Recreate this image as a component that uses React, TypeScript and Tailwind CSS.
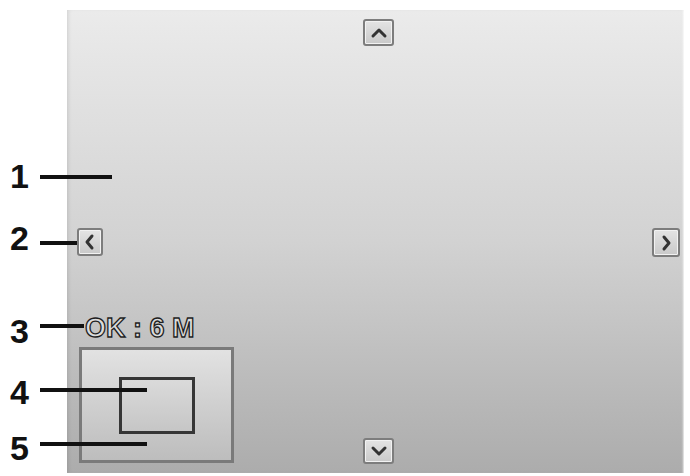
import React from 'react';

type Dir = 'up' | 'down' | 'left' | 'right';

const chevrons: Record<Dir, string> = {
  up: 'M9 16 L15 10 L21 16',
  down: 'M9 10 L15 16 L21 10',
  left: 'M15 8 L10 14 L15 20',
  right: 'M11 8 L16 14 L11 20',
};

const NavButton = ({ dir, className }: { dir: Dir; className: string }) => {
  const vertical = dir === 'up' || dir === 'down';
  return (
    <div
      className={`flex items-center justify-center rounded-[3px] border-2 border-[#7d7d7d] bg-gradient-to-b from-[#e4e4e4] to-[#c9c9c9] shadow-[inset_0_0_0_1px_#f2f2f2] ${className}`}
    >
      <svg
        width={vertical ? 30 : 26}
        height={vertical ? 26 : 28}
        viewBox={vertical ? '0 0 30 26' : '0 0 26 28'}
        fill="none"
        className="shrink-0"
      >
        <path d={chevrons[dir]} stroke="#333" strokeWidth="3" strokeLinecap="round" strokeLinejoin="round" />
      </svg>
    </div>
  );
};

const callouts = [
  { n: '1', top: 'top-[159px]', mt: 'mt-[16px]', w: 'w-[72px]' },
  { n: '2', top: 'top-[221px]', mt: 'mt-[20px]', w: 'w-[37px]' },
  { n: '3', top: 'top-[314px]', mt: 'mt-[10px]', w: 'w-[44px]' },
  { n: '4', top: 'top-[375px]', mt: 'mt-[13px]', w: 'w-[107px]' },
  { n: '5', top: 'top-[431px]', mt: 'mt-[11px]', w: 'w-[107px]' },
];

const App = () => {
  return (
    <div className="relative w-[690px] h-[476px] overflow-hidden bg-white font-['Liberation_Sans',Arial,sans-serif]">
      {/* preview screen */}
      <div className="ml-[67px] mt-[10px] flex h-[463px] w-[617px] flex-col bg-gradient-to-b from-[#ebebeb] via-[#d2d2d2] to-[#acacac] pt-[9px] shadow-[inset_3px_0_4px_-2px_rgba(0,0,0,0.12),inset_-2px_0_2px_-1px_rgba(255,255,255,0.8)]">
        <NavButton dir="up" className="ml-[296px] h-[27px] w-[31px]" />

        <div className="mt-[182px] flex justify-between pl-[10px] pr-[4px]">
          <NavButton dir="left" className="h-[28px] w-[26px]" />
          <NavButton dir="right" className="h-[29px] w-[28px]" />
        </div>

        <div className="ml-[18px] mt-[58px] text-[27px] font-bold leading-none text-[#dcdcdc] [-webkit-text-stroke:1.3px_#1e1e1e]">
          OK : 6 M
        </div>

        <div className="mt-[5px] flex items-end pl-[12px]">
          <div className="h-[116px] w-[155px] border-[3px] border-[#7a7a7a] bg-gradient-to-b from-[#e2e2e2] to-[#bdbdbd] pl-[37px] pt-[27px]">
            <div className="h-[57px] w-[76px] border-[3px] border-[#363636] bg-gradient-to-b from-[#dadada] to-[#c6c6c6]" />
          </div>
          <NavButton dir="down" className="mb-[-1px] ml-[129px] h-[26px] w-[31px]" />
        </div>
      </div>

      {/* callout numbers */}
      {callouts.map((c) => (
        <div key={c.n} className={`absolute left-[10px] flex items-start ${c.top}`}>
          <span className="w-[30px] text-[34px] font-bold leading-none text-[#111]">{c.n}</span>
          <div className={`h-[4px] bg-[#111] ${c.mt} ${c.w}`} />
        </div>
      ))}
    </div>
  );
};

export default App;
